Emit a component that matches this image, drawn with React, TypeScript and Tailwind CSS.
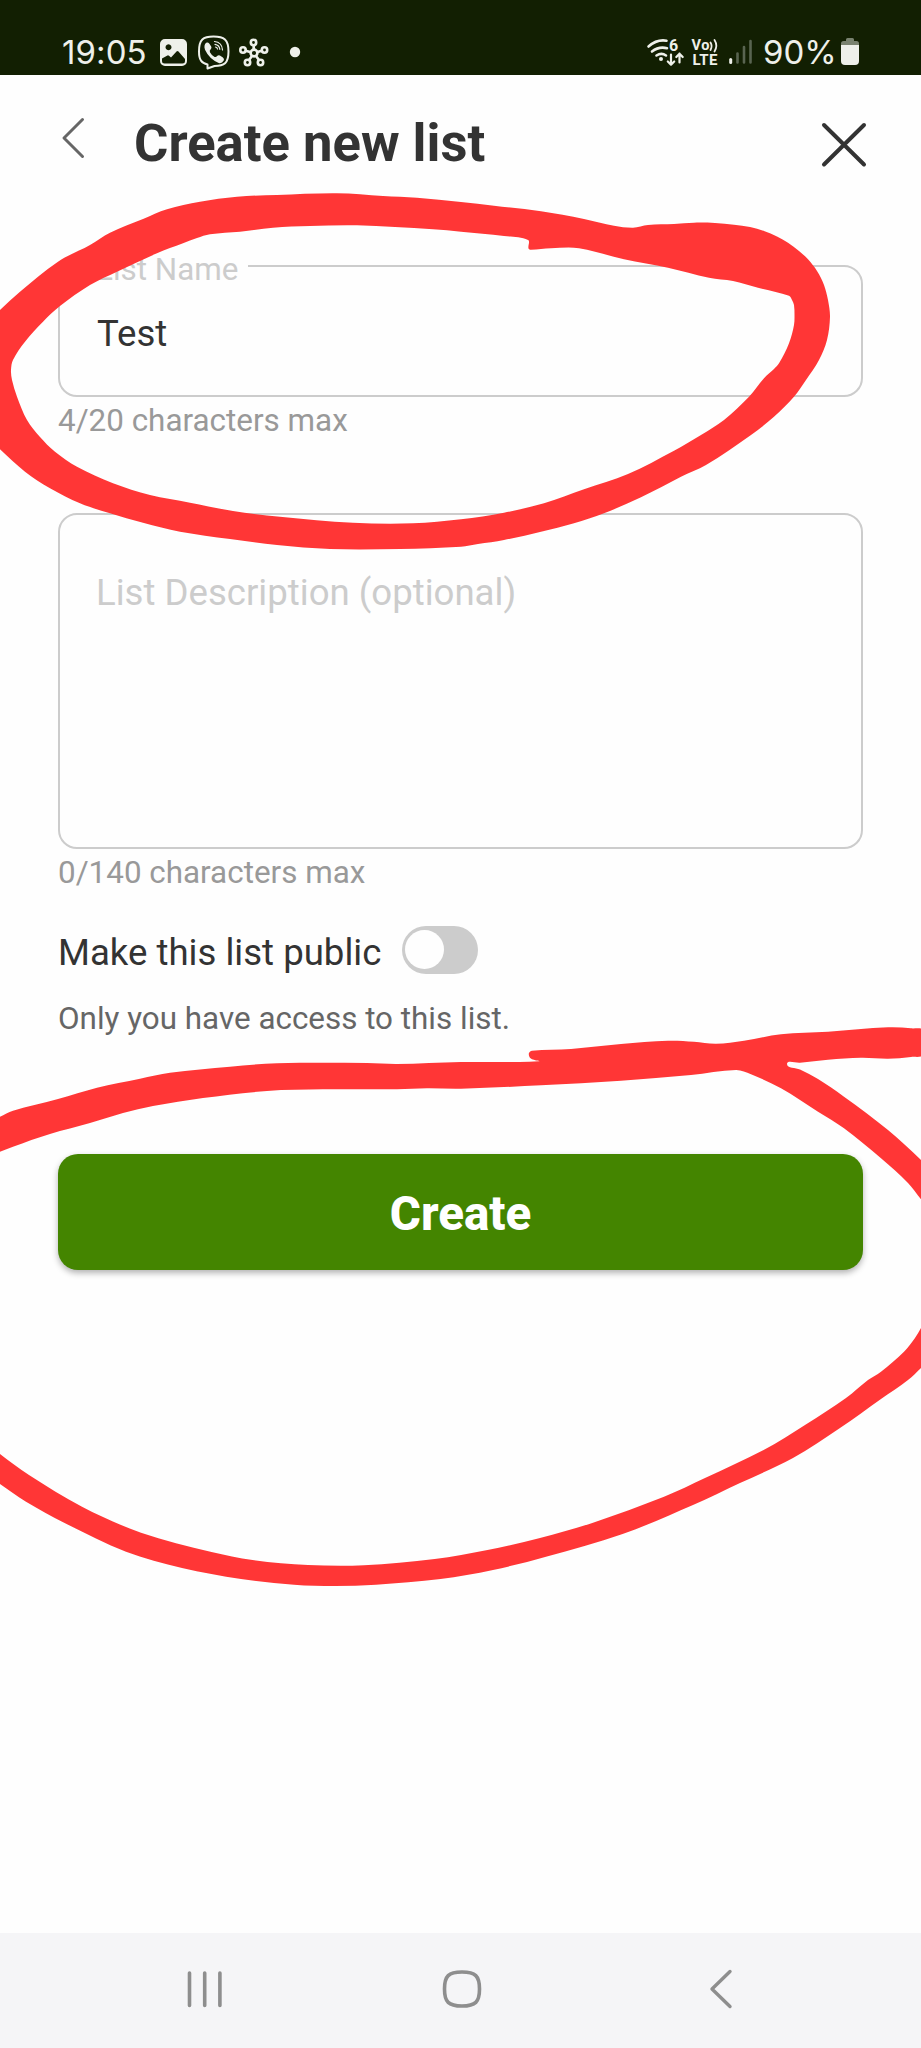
const NAME_MARK =
    "-20,332 0,310 20,291.7 58,261.7 90,245 110,232.7 143,219 167,209.3 200,201.7 237,196.7 277,195 337,193.3 383,196 417,197.7 461,202 494,205.7 541,211.3 584,219 614,225.7 633,227.7 648,225 674,224 694,222.7 715,223 734,224.7 750,227 764,231 777,236.5 788,242.7 799,251 808,259.3 817,271 824,285 828,300 830,316.7 827,340 819,360 806,380 794,396.7 774,416.7 751,435 706,465 681,476.7 641,497.3 604,513.3 574,523.3 541,531.7 504,540 478,544 461,546.7 400,549 330,549 277,545 230,539 180,531.7 143,522.7 110,513.3 80,503.3 50,488.3 25,471.7 0,449.3 -20,430";

const NAME_HOLE =
    "11,370 12,380 17,396.7 27,420 40,437 55,451.7 77,466.7 113,483.3 150,495 190,502.7 233,511 280,516.7 353,522.7 413,523.3 461,519.3 504,512.7 544,503.3 584,489.3 628,474 674,450.7 701,435 724,420 749,396.7 764,378.3 774,369 779,363.3 789,343.3 794,325 794.5,315 794,305 792,300 789,295.7 758,287.7 733,281 709,277.7 668,267.7 624,259.3 579,248.3 551,248.3 531,249.7 528.5,248.5 528,240 504,236 461,231.7 433,229.3 357,225.3 310,226 273,227.7 240,231.7 210,234.3 197,238 183,243.3 157,253.3 117,271.7 90,285 60,306 43,321.7 25,341.7 13,360";

const BUTTON_MARK_TOP =
    "-20,1126 0,1116.7 13,1110.7 58,1099 97,1087.7 140,1078.7 170,1072.7 230,1066.7 277,1063.3 367,1063 397,1064 461,1062 504,1062 539,1061.3 532,1059.3 529.5,1057 529,1053 532,1050.7 571,1049 621,1044 668,1040.7 694,1041.7 716,1043.7 744,1040.7 781,1034.3 828,1031.7 888,1027.3 911,1028.3 925,1031 925,1054 911,1057 888,1058.7 861,1057.7 828,1059.7 800,1062.7 787,1064 800,1069.5 818,1079 844,1096.7 888,1130 921,1160 940,1180 940,1222 921,1199.3 908,1183 881,1158.3 844,1128.3 818,1111.7 781,1088.3 751,1074.3 736,1070 691,1075 621,1080.7 541,1085.3 461,1088.7 427,1088.3 397,1089.3 323,1089.3 267,1091 203,1098 153,1106 123,1113 90,1123 50,1134 13,1146.7 0,1151.7 -20,1160";

const BUTTON_MARK_BOTTOM =
    "935,1302 921,1328 915,1338 904,1351.7 881,1371.7 868,1380 846,1398 805,1425 763.6,1450 705,1478 664,1496.7 593,1522.7 540,1538 487.5,1550 434.7,1559 364,1565.3 308,1565 252.6,1560 211.5,1552 141,1532.7 82,1506.7 29,1475 0,1454 -20,1438 -20,1470 0,1484 26,1501.7 64.6,1523 126,1551.7 182,1568 241,1579 294,1584.7 335,1586 376,1584.7 440.5,1579 493,1570 546,1556.7 622.6,1534 693,1505 740,1483 793,1458 840,1428 881,1399 908,1380 921,1368 935,1354";

// closed Catmull-Rom curve through the points, as bezier segments
function smooth(points: string) {
    const p = points.split(" ").map((s) => s.split(",").map(Number));
    const n = p.length;
    let d = `M${p[0][0]} ${p[0][1]}`;
    for (let i = 0; i < n; i++) {
        const a = p[(i - 1 + n) % n];
        const b = p[i];
        const c = p[(i + 1) % n];
        const e = p[(i + 2) % n];
        // limit the handles so short segments do not loop
        const len = Math.hypot(c[0] - b[0], c[1] - b[1]) / 3;
        const t1 = Math.hypot(c[0] - a[0], c[1] - a[1]) || 1;
        const t2 = Math.hypot(e[0] - b[0], e[1] - b[1]) || 1;
        const x1 = b[0] + ((c[0] - a[0]) / t1) * len;
        const y1 = b[1] + ((c[1] - a[1]) / t1) * len;
        const x2 = c[0] - ((e[0] - b[0]) / t2) * len;
        const y2 = c[1] - ((e[1] - b[1]) / t2) * len;
        d += `C${x1.toFixed(1)} ${y1.toFixed(1)} ${x2.toFixed(1)} ${y2.toFixed(1)} ${c[0]} ${c[1]}`;
    }
    return d + "Z";
}

function Marks() {
    return (
        <svg className="pointer-events-none absolute inset-0" width="921" height="2048" viewBox="0 0 921 2048" fill="#ff3636">
            <path fillRule="evenodd" d={smooth(NAME_MARK) + smooth(NAME_HOLE)} />
            <path d={smooth(BUTTON_MARK_TOP)} />
            <path d={smooth(BUTTON_MARK_BOTTOM)} />
        </svg>
    )
}

function NotificationIcons() {
    return (
        <svg width="146" height="38" viewBox="156 34 146 38" fill="none" stroke="#eef0ea" strokeLinecap="round" strokeLinejoin="round">
            {/* gallery */}
            <path fill="#eef0ea" stroke="none" fillRule="evenodd" d="M165 39h17a5 5 0 0 1 5 5v17a5 5 0 0 1-5 5h-17a5 5 0 0 1-5-5V44a5 5 0 0 1 5-5ZM168.5 44.3a3 3 0 1 0 .01 0ZM162 58.5v2.5a2.500 2.500 0 0 0 2.500 2.500h18a2.500 2.500 0 0 0 2.500-2.500v-2l-6.500-7.500q-1-1-2 0l-5.500 6-2-1.800q-1-.8-2 0Z" />
            {/* viber */}
            <path strokeWidth="2" d="M213.500 36.500c10.500 0 15 3 15 15s-4.500 14.500-14 14.500l-7 2.500v-4c-6-1.500-8.500-4.500-8.500-13 0-12 4-15 14.500-15Z" />
            <path fill="#eef0ea" stroke="none" d="M206.200 42.800q1.700-1 3 .8l2 3q.8 1.600-.5 2.700-1.700 1.300-.6 3.200 1.500 3 4.500 4.400 1.500.6 2.500-.8 1.200-1.500 2.800-.6l3 2q1.800 1.300.8 3-2 3.400-5 2.400-9.500-4-13.700-13.200-1.600-4.400 1.200-6.900Z" />
            <path strokeWidth="1.200" d="M214.500 41.500q7.500.7 8 8.500M215 44.300q4.500.7 4.800 5M215.500 47q1.800.3 2 2" />
            {/* hub */}
            <g strokeWidth="2.600">
                <circle cx="254" cy="53" r="3.400" />
                <circle cx="253.500" cy="42.500" r="2.700" />
                <circle cx="243" cy="50" r="2.700" />
                <circle cx="264.500" cy="50" r="2.700" />
                <circle cx="247.500" cy="62.500" r="2.700" />
                <circle cx="260.500" cy="62.500" r="2.700" />
                <path d="M253.700 45.200v4M245.700 50.800l4.500 1.200M261.800 50.800l-4.300 1.200M249 60l2.800-3.800M259 60l-2.800-3.800" />
            </g>
            <circle cx="295" cy="52" r="5.200" fill="#eef0ea" stroke="none" />
        </svg>
    )
}

function SignalIcons() {
    return (
        <svg width="112" height="38" viewBox="644 34 112 38" fill="none" stroke="#eef0ea" strokeWidth="2.600" strokeLinecap="round">
            <path d="M648.500 46.500q8.500-7.500 18-5.800M652 51.500q7-5.500 15-3.300M656.500 55.500q5-3.200 9.500 0" />
            <circle cx="661" cy="59" r="2" fill="#eef0ea" stroke="none" />
            <text x="669" y="50.500" fontFamily="Roboto" fontWeight="700" fontSize="16" fill="#eef0ea" stroke="none">6</text>
            <path strokeWidth="2.200" strokeLinejoin="round" d="M671 54.500v10M667.800 61.500l3.200 3.200 3.200-3.200M679.500 62.500v-8.800M676.300 57l3.200-3.300 3.200 3.300" />
            <text x="691.500" y="50.300" fontFamily="Roboto" fontWeight="700" fontSize="14.500" fill="#eef0ea" stroke="none" textLength="18">Vo</text>
            <path strokeWidth="1.800" d="M710.500 42.500q2.200 3.500 0 7.500M714.500 40q3.600 5.500 0 11.500" />
            <text x="692.500" y="64.800" fontFamily="Roboto" fontWeight="700" fontSize="15" fill="#eef0ea" stroke="none" textLength="25">LTE</text>
            <path strokeWidth="3" d="M730.700 59.500v3" />
            <path strokeWidth="2.600" stroke="#596450" d="M737.500 53.500v9M744 47v15.500M750.500 41v21.500" />
        </svg>
    )
}

function StatusBar() {
    return (
        <div className="flex h-[75px] items-start bg-[#121f02] pt-[34px] pl-[62px] font-[Inter,sans-serif] text-[33px] leading-[36px] text-[#eef0ea]">
            <span className="w-[94px] tracking-[0.1px]">19:05</span>
            <NotificationIcons />
            <div className="ml-[342px] flex">
                <SignalIcons />
            </div>
            <span className="ml-[7px] w-[77px]">90%</span>
            <svg width="20" height="34" viewBox="840 34 20 34">
                <path d="M841 45v-1.500q0-2.500 2.500-2.500h2.500v-1.500q0-1.500 1.500-1.500h5q1.500 0 1.500 1.500v1.500h2.500q2.500 0 2.500 2.500v1.500Z" fill="#79826f" />
                <path d="M841 45h18v16q0 4-4 4h-10q-4 0-4-4Z" fill="#eef0ea" />
            </svg>
        </div>
    )
}

function Header() {
    return (
        <div className="flex h-[190px] items-start pt-[38px] pl-[60px]">
            <svg className="mt-[3px]" width="28" height="44" viewBox="60 116 28 44" fill="none" stroke="#666" strokeWidth="3" strokeLinecap="round" strokeLinejoin="round">
                <path d="M82.500 119.500 64 138l18.500 18.500" />
            </svg>
            <h1 className="ml-[46px] w-[686px] text-[52.6px] leading-[60px] font-bold text-[#333]">Create new list</h1>
            <svg className="mt-[7px]" width="50" height="50" viewBox="820 120 50 50" stroke="#333" strokeWidth="4" strokeLinecap="round">
                <path d="m824 125 40 39.500M864 125l-40 39.500" />
            </svg>
        </div>
    )
}

function NavBar() {
    return (
        <div className="mt-auto flex h-[115px] items-start justify-between bg-[#f5f5f7] pt-[34px] pr-[187px] pl-[184px]">
            <svg width="42" height="44" viewBox="184 1967 42 44" stroke="#8e8e8e" strokeWidth="3.600" strokeLinecap="round">
                <path d="M189.500 1973v32.500M204.700 1973v32.500M219.900 1973v32.500" />
            </svg>
            <svg className="mr-[8px]" width="44" height="44" viewBox="440 1967 44 44" fill="none" stroke="#8e8e8e" strokeWidth="3.600">
                <path d="M462 1972c13.500 0 17.500 4 17.500 17s-4 17-17.500 17-17.500-4-17.500-17 4-17 17.500-17Z" />
            </svg>
            <svg width="28" height="44" viewBox="706 1967 28 44" fill="none" stroke="#8e8e8e" strokeWidth="3.400" strokeLinecap="round" strokeLinejoin="round">
                <path d="M730 1971.500 712 1989l18 17.500" />
            </svg>
        </div>
    )
}

export default function App() {
    return (
        <div className="relative flex h-[2048px] w-[921px] flex-col overflow-hidden bg-[#fefefe] font-[Roboto,sans-serif]">
            <StatusBar />
            <Header />
            <div className="flex flex-col px-[58px]">
                <div className="relative h-[132px] rounded-[19px] border-2 border-[#ccc] pt-[45px] pl-[37px]">
                    <span className="absolute -top-[15px] left-[26px] w-[162px] bg-[#fefefe] pl-[10px] text-[31.4px] leading-[36px] whitespace-nowrap text-[#ccc]">List Name</span>
                    <p className="text-[36.6px] leading-[44px] text-[#333]">Test</p>
                </div>
                <p className="mt-[6px] text-[31.4px] leading-[36px] text-[#999]">4/20 characters max</p>
                <div className="mt-[74px] h-[336px] rounded-[19px] border-2 border-[#ccc] pt-[56px] pl-[36px]">
                    <p className="text-[36.6px] leading-[44px] text-[#ccc]">List Description (optional)</p>
                </div>
                <p className="mt-[6px] text-[31.4px] leading-[36px] text-[#999]">0/140 characters max</p>
                <div className="mt-[35px] flex h-[48px] items-center">
                    <span className="w-[344px] pt-[5px] text-[36.6px] leading-[48px] text-[#333]">Make this list public</span>
                    <div className="h-[48px] w-[76px] rounded-full bg-[#ccc] py-[4px] pl-[3px]">
                        <div className="h-[39px] w-[39px] rounded-full bg-[#fefefe]" />
                    </div>
                </div>
                <p className="mt-[27px] text-[31.4px] leading-[36px] text-[#666]">Only you have access to this list.</p>
                <button className="mt-[117px] h-[116px] rounded-[20px] bg-[#448500] pt-[5px] text-[47.5px] font-extrabold text-white shadow-[0_3px_6px_rgba(0,0,0,0.3)]">Create</button>
            </div>
            <NavBar />
            <Marks />
        </div>
    )
}
